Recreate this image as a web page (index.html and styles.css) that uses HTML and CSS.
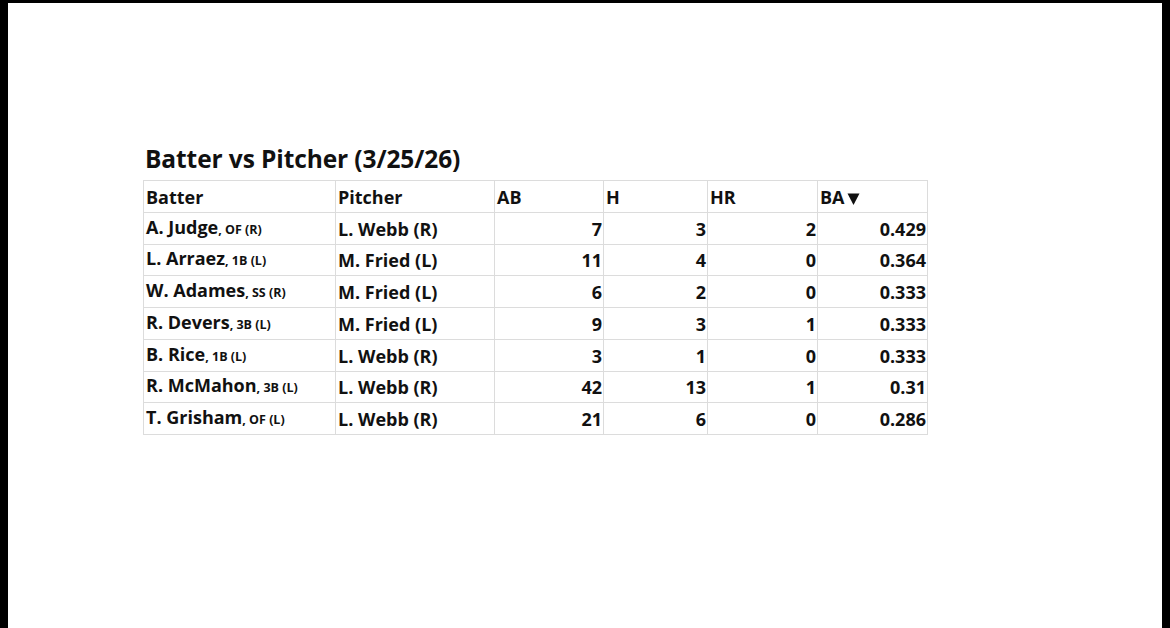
FILE: index.html
```html
<!DOCTYPE html>
<html lang="en">
<head>
<meta charset="utf-8">
<title>Batter vs Pitcher</title>
<link rel="stylesheet" href="styles.css">
</head>
<body>
<div class="frame">
  <div class="sheet">
    <h1 class="title">Batter vs Pitcher (3/25/26)</h1>
    <table class="grid">
      <colgroup>
        <col class="c-batter"><col class="c-pitcher"><col class="c-ab"><col class="c-h"><col class="c-hr"><col class="c-ba">
      </colgroup>
      <thead>
        <tr>
          <th>Batter</th><th>Pitcher</th><th>AB</th><th>H</th><th>HR</th>
          <th>BA<svg class="sort" width="13" height="12" viewBox="0 0 13 12"><polygon points="0.5,0.5 12.5,0.5 6.5,12" fill="#111"/></svg></th>
        </tr>
      </thead>
      <tbody>
        <tr><td>A. Judge<span class="pos">, OF (R)</span></td><td>L. Webb (R)</td><td class="n">7</td><td class="n">3</td><td class="n">2</td><td class="n">0.429</td></tr>
        <tr><td>L. Arraez<span class="pos">, 1B (L)</span></td><td>M. Fried (L)</td><td class="n">11</td><td class="n">4</td><td class="n">0</td><td class="n">0.364</td></tr>
        <tr><td>W. Adames<span class="pos">, SS (R)</span></td><td>M. Fried (L)</td><td class="n">6</td><td class="n">2</td><td class="n">0</td><td class="n">0.333</td></tr>
        <tr><td>R. Devers<span class="pos">, 3B (L)</span></td><td>M. Fried (L)</td><td class="n">9</td><td class="n">3</td><td class="n">1</td><td class="n">0.333</td></tr>
        <tr><td>B. Rice<span class="pos">, 1B (L)</span></td><td>L. Webb (R)</td><td class="n">3</td><td class="n">1</td><td class="n">0</td><td class="n">0.333</td></tr>
        <tr><td>R. McMahon<span class="pos">, 3B (L)</span></td><td>L. Webb (R)</td><td class="n">42</td><td class="n">13</td><td class="n">1</td><td class="n">0.31</td></tr>
        <tr><td>T. Grisham<span class="pos">, OF (L)</span></td><td>L. Webb (R)</td><td class="n">21</td><td class="n">6</td><td class="n">0</td><td class="n">0.286</td></tr>
      </tbody>
    </table>
  </div>
</div>
</body>
</html>
```

FILE: styles.css
```css
html, body {
  margin: 0;
  padding: 0;
  background: #000;
  height: 100%;
}
.frame {
  box-sizing: border-box;
  height: 628px;
  padding: 3px 8px 0 8px;
  display: flex;
}
.sheet {
  flex: 1;
  background: #fff;
  padding: 139px 0 0 135px;
  font-family: "Open Sans", Lato, "Liberation Sans", sans-serif;
  color: #111;
}
.title {
  margin: 0 0 0 2px;
  font-size: 24.5px;
  font-weight: 700;
  line-height: 34px;
  height: 38px;
  letter-spacing: -0.1px;
}
.grid {
  border-collapse: collapse;
  table-layout: fixed;
  width: 784px;
  font-size: 18px;
  font-weight: 700;
}
.c-batter { width: 192px; }
.c-pitcher { width: 159px; }
.c-ab { width: 109px; }
.c-h { width: 104px; }
.c-hr { width: 110px; }
.c-ba { width: 110px; }
.grid tr { height: 31.75px; }
.grid th, .grid td {
  border: 1px solid #dcdcdc;
  padding: 0 2px 3px 2px;
  vertical-align: bottom;
  text-align: left;
  line-height: 23px;
  white-space: nowrap;
  overflow: hidden;
}
.grid th { font-weight: 700; }
.grid td.n { text-align: right; padding-right: 1px; }
.pos {
  font-size: 12.5px;
  font-weight: 700;
}
.sort {
  margin-left: 2px;
  vertical-align: -1px;
}
```
